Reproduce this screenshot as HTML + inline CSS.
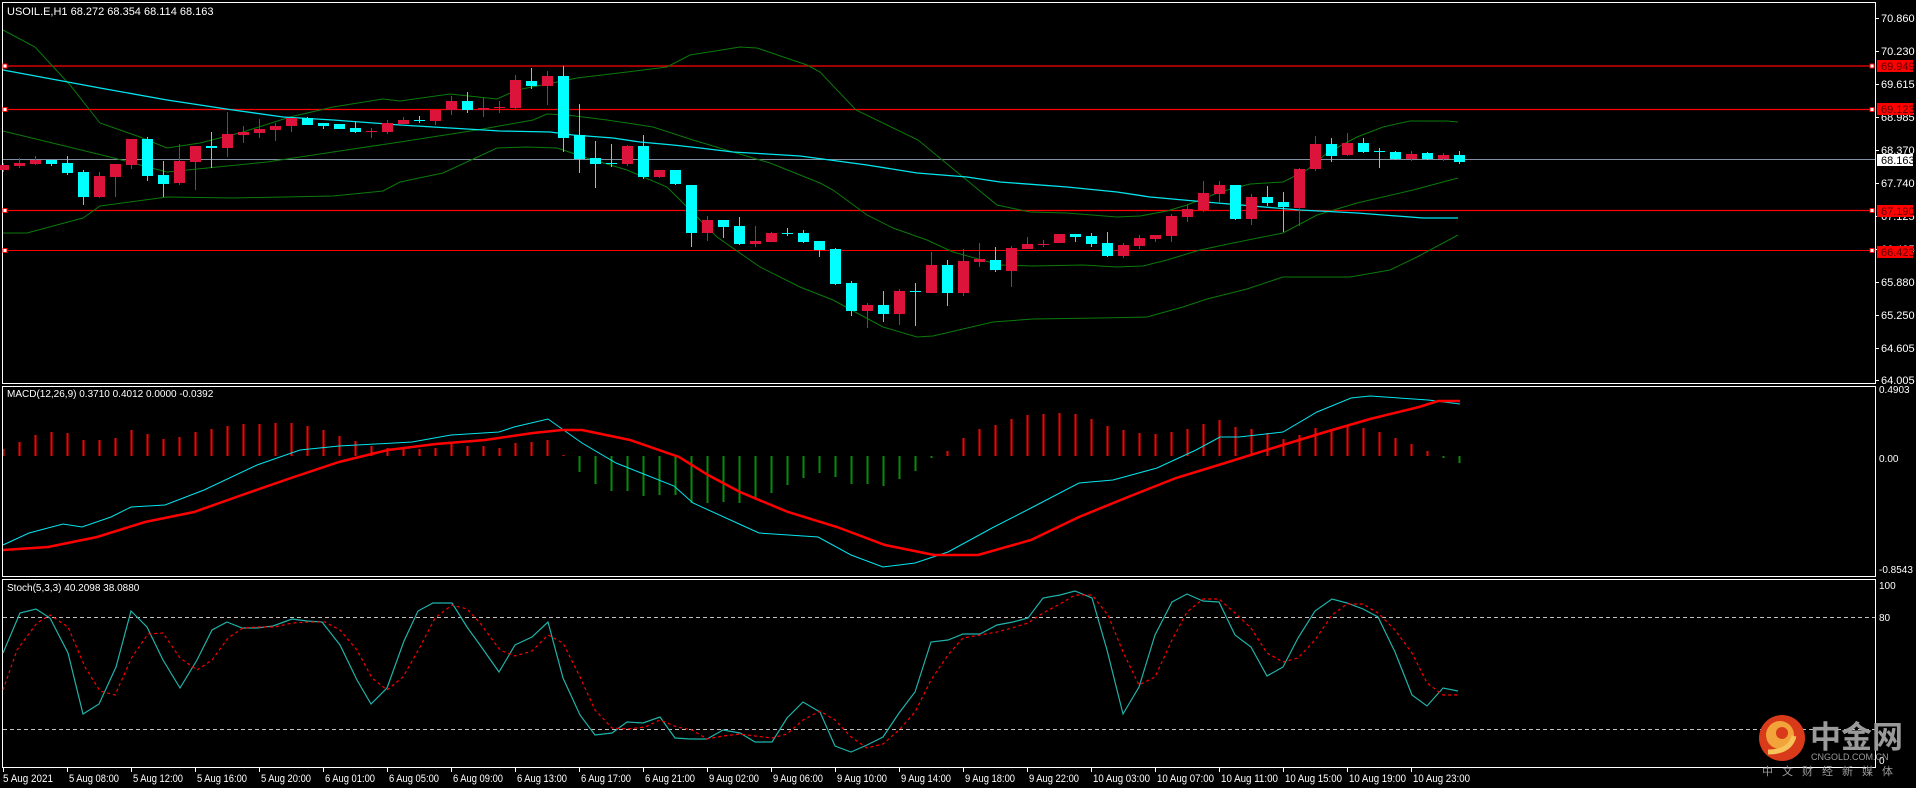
<!DOCTYPE html>
<html><head><meta charset="utf-8"><style>
html,body{margin:0;padding:0;background:#000;width:1916px;height:788px;overflow:hidden}
svg{display:block}
text{font-family:"Liberation Sans","Noto Sans CJK SC",sans-serif;font-size:11px}
</style></head><body>
<svg id="s" width="1916" height="788" xmlns="http://www.w3.org/2000/svg">
<rect width="1916" height="788" fill="#000"/>
<g id="bg"></g>
<g stroke="#fff" fill="none" stroke-width="1">
<rect x="2.5" y="2.5" width="1873" height="381"/>
<rect x="2.5" y="386.5" width="1873" height="190"/>
<rect x="2.5" y="579.5" width="1873" height="188"/>
</g>
<g id="fg"></g>
<g fill="#fff">
<text x="7" y="15">USOIL.E,H1  68.272 68.354 68.114 68.163</text>
<text x="7" y="397" style="font-size:10px">MACD(12,26,9) 0.3710 0.4012 0.0000 -0.0392</text>
<text x="7" y="591" style="font-size:10px">Stoch(5,3,3) 40.2098 38.0880</text>
<text x="1881" y="22">70.860</text>
<text x="1881" y="55">70.230</text>
<text x="1881" y="88">69.615</text>
<text x="1881" y="121">68.985</text>
<text x="1881" y="154">68.370</text>
<text x="1881" y="187">67.740</text>
<text x="1881" y="220">67.125</text>
<text x="1881" y="253">66.495</text>
<text x="1881" y="286">65.880</text>
<text x="1881" y="319">65.250</text>
<text x="1881" y="352">64.605</text>
<text x="1881" y="384">64.005</text>
</g>
<g>
<rect x="1877" y="60" width="36" height="12" fill="#f00"/><text x="1881" y="70" fill="#5a0000">69.949</text>
<rect x="1877" y="103" width="36" height="12" fill="#f00"/><text x="1881" y="113" fill="#5a0000">69.123</text>
<rect x="1877" y="154" width="36" height="12" fill="#fff"/><text x="1881" y="164" fill="#000">68.163</text>
<rect x="1877" y="205" width="36" height="12" fill="#f00"/><text x="1881" y="215" fill="#5a0000">67.190</text>
<rect x="1877" y="246" width="36" height="12" fill="#f00"/><text x="1881" y="256" fill="#5a0000">66.423</text>
</g>
<g fill="#fff">
<text x="1879" y="393" style="font-size:10px">0.4903</text>
<text x="1879" y="462" style="font-size:10px">0.00</text>
<text x="1879" y="573" style="font-size:10px">-0.8543</text>
<text x="1879" y="589" style="font-size:10px">100</text>
<text x="1879" y="621" style="font-size:10px">80</text>
<text x="1879" y="764" style="font-size:10px">0</text>
</g>
<g id="time"></g>
<g>
<circle cx="1782" cy="738" r="23" fill="#d83a1a"/>
<circle cx="1780" cy="735" r="14" fill="#f2a33a"/>
<circle cx="1782" cy="733" r="6" fill="#d83a1a"/>
<path d="M1768 752 Q1790 752 1794 736" stroke="#f6c25a" stroke-width="5" fill="none"/>
<text x="1810" y="748" fill="#9a9a9a" style="font-size:31px;font-weight:bold">中金网</text>
<text x="1811" y="760" fill="#9a9a9a" style="font-size:9px">CNGOLD.COM.CN</text>
<text x="1762" y="775" fill="#9a9a9a" style="font-size:11px;letter-spacing:9px">中文财经新媒体</text>
</g>
</svg>
<script>
var NS="http://www.w3.org/2000/svg";
function el(par,tag,at){var e=document.createElementNS(NS,tag);for(var k in at)e.setAttribute(k,at[k]);document.getElementById(par).appendChild(e);return e;}
function pl(par,pts,st,w,extra){var a={points:pts.map(function(p){return p[0]+","+p[1]}).join(" "),fill:"none",stroke:st,"stroke-width":w};if(extra)for(var k in extra)a[k]=extra[k];return el(par,"polyline",a);}
[[66,"#f00",1.2],[109.5,"#f00",1.2],[210.5,"#f00",1.2],[250.5,"#f00",1]].forEach(function(h){
 el("bg","line",{x1:3,x2:1875,y1:h[0],y2:h[0],stroke:h[1],"stroke-width":h[2]});
 el("fg","rect",{x:3,y:h[0]-2,width:4,height:4,fill:"#fff",stroke:"#f00","stroke-width":1});
 el("fg","rect",{x:1870,y:h[0]-2,width:4,height:4,fill:"#fff",stroke:"#f00","stroke-width":1});
});
el("bg","line",{x1:3,x2:1875,y1:159.5,y2:159.5,stroke:"#8090a0","stroke-width":1});
pl("bg",[[3,30],[35,47],[70,85],[100,123],[140,137],[167,148],[200,143],[243,132],[290,117],[333,107],[383,99],[400,101],[450,94],[497,99],[517,90],[577,78],[627,72],[667,67],[690,55],[740,47],[757,48],[807,65],[820,72],[856,110],[918,140],[997,205],[1030,212],[1067,213],[1117,217],[1140,216],[1167,211],[1187,205],[1220,192],[1250,184],[1283,182],[1307,170],[1327,153],[1357,137],[1383,127],[1410,121],[1447,121],[1458,122]],"#0a7a0a",1);
pl("bg",[[3,131],[110,157],[167,172],[267,162],[333,152],[400,142],[477,130],[533,120],[547,114],[567,115],[607,120],[653,127],[693,140],[733,152],[770,163],[820,183],[833,190],[867,215],[893,228],[927,240],[953,252],[1000,265],[1033,266],[1083,265],[1117,267],[1143,266],[1167,260],[1200,250],[1233,243],[1283,233],[1317,215],[1357,203],[1413,190],[1458,178]],"#0a7a0a",1);
pl("bg",[[3,233],[27,233],[83,218],[100,206],[167,197],[233,198],[333,196],[383,191],[400,182],[443,173],[497,148],[527,147],[557,148],[587,158],[627,170],[667,187],[687,207],[717,237],[760,267],[800,287],[833,300],[857,313],[883,327],[917,337],[933,336],[993,322],[1033,319],[1100,318],[1147,317],[1183,307],[1207,299],[1247,289],[1283,277],[1350,277],[1390,270],[1417,257],[1458,235]],"#0a7a0a",1);
pl("bg",[[3,70],[100,88],[167,100],[233,110],[283,117],[333,120],[400,125],[450,128],[500,131],[550,132],[573,135],[613,138],[640,142],[673,145],[700,148],[733,152],[767,154],[800,156],[867,165],[917,173],[967,177],[1000,182],[1067,187],[1117,192],[1150,197],[1217,203],[1300,210],[1357,213],[1423,218],[1458,218]],"#00e5ee",1.3);
var C="r 165 170 163 172|r 163 166 158 168|r 160 164 156 165|c 160 164 160 166|c 163 173 156 175|c 172 197 170 205|r 176 197 172 198|r 164 177 164 197|r 139 165 139 169|c 139 176 137 181|c 175 184 161 197|r 161 183 144 185|r 146 162 146 190|c 146 148 132 168|r 134 148 112 157|r 132 135 126 143|r 129 133 119 138|r 126 130 123 141|r 118 126 118 132|c 118 125 117 125|c 123 126 123 129|c 124 129 124 129|c 128 132 122 133|r 131 132 128 138|r 123 132 120 134|r 120 124 117 126|c 120 121 116 123|r 110 121 110 125|r 101 110 96 115|c 101 110 92 113|r 108 110 97 117|r 107 108 101 113|r 80 108 75 109|c 81 86 68 89|r 76 86 71 105|c 76 138 66 152|c 135 159 104 173|c 158 164 141 188|c 163 164 144 167|r 146 164 145 166|c 146 177 135 179|r 170 177 170 178|c 170 184 170 185|c 185 233 185 247|r 220 233 216 241|c 220 227 220 238|c 226 244 217 245|r 241 244 226 247|r 233 242 232 242|c 233 234 228 236|c 233 242 230 243|c 241 250 241 257|c 249 284 248 285|c 283 311 281 316|r 305 311 303 328|c 305 314 291 322|r 291 314 289 325|c 291 292 283 326|r 265 293 252 293|c 265 293 260 306|r 261 293 249 296|r 259 262 243 267|c 260 270 247 272|r 248 271 246 287|r 244 249 237 249|r 244 245 240 247|r 234 243 234 243|c 234 237 234 242|c 236 244 233 247|c 243 256 232 257|r 245 256 243 258|r 238 246 235 249|r 235 239 235 242|r 216 236 214 242|r 209 217 205 222|r 193 210 181 212|r 185 194 181 203|c 185 219 185 220|r 197 219 194 225|c 197 203 186 206|c 202 207 192 232|r 169 208 168 226|r 144 169 136 171|c 144 156 138 162|r 143 155 133 156|c 143 152 138 153|c 151 152 148 168|c 152 159 151 160|r 154 159 151 161|c 153 159 152 160|r 155 159 153 161|c 155 162 151 164".split("|");
C.forEach(function(s,k){var a=s.split(" ");var col=a[0]=="r"?"#dc143c":"#00ffff";var t=+a[1],b=+a[2],wt=+a[3],wb=+a[4];var cx=3+16*k;
 el("fg","rect",{x:cx,y:wt,width:1,height:Math.max(1,wb-wt),fill:col});
 el("fg","rect",{x:cx-5,y:t,width:11,height:Math.max(1,b-t),fill:col});});
var M=[449,442,435,432,433,440,440,438,430,434,439,437,432,429,426,424,424,423,423,426,430,436,441,446,448,449,449,448,443,446,446,448,443,442,440,455,472,484,491,491,496,495,495,503,503,502,503,499,493,485,478,473,477,484,484,486,479,471,458,451,438,429,425,419,415,414,413,414,419,426,430,433,434,432,429,424,420,427,429,433,439,435,428,429,426,428,432,438,444,451,458,463];
var greenIdx={};for(var i=36;i<=58;i++)greenIdx[i]=1;greenIdx[90]=1;greenIdx[91]=1;
M.forEach(function(v,k){var cx=3+16*k;var z=456;var g=greenIdx[k];var y1=Math.min(v,z),h=Math.max(1,Math.abs(v-z));
 el("bg","rect",{x:cx-0.5,y:y1,width:2,height:h,fill:g?"#0a8a0a":"#f00"});});
pl("fg",[[3,545],[29,533],[63,524],[82,527],[111,517],[131,507],[165,505],[204,490],[257,465],[300,450],[339,446],[412,442],[451,435],[499,432],[514,427],[548,419],[582,443],[616,463],[674,486],[693,503],[737,523],[759,533],[818,537],[851,555],[883,567],[915,563],[948,552],[992,528],[1031,508],[1079,483],[1113,480],[1157,468],[1196,450],[1220,437],[1239,437],[1283,432],[1317,412],[1351,398],[1370,396],[1428,400],[1460,404]],"#00e5ee",1);
pl("fg",[[3,550],[48,547],[97,537],[145,522],[194,512],[242,495],[291,478],[339,462],[388,450],[436,444],[485,440],[533,433],[562,430],[582,430],[630,440],[679,457],[708,475],[740,492],[788,512],[837,527],[885,545],[934,555],[978,555],[1031,540],[1079,517],[1128,497],[1176,478],[1225,463],[1273,448],[1322,433],[1370,419],[1419,407],[1438,401],[1460,401]],"#f00",2.5);
el("bg","line",{x1:3,x2:1875,y1:617.5,y2:617.5,stroke:"#c0c0c0","stroke-dasharray":"4,3"});
el("bg","line",{x1:3,x2:1875,y1:729.5,y2:729.5,stroke:"#c0c0c0","stroke-dasharray":"4,3"});
pl("fg",[[3,653],[20,613],[36,609],[50,618],[68,653],[83,714],[99,704],[116,667],[131,611],[147,627],[163,660],[180,688],[197,660],[212,630],[227,622],[242,628],[257,628],[273,626],[292,619],[307,621],[322,622],[340,645],[357,680],[371,704],[387,688],[404,641],[418,611],[433,603],[452,603],[467,627],[480,645],[499,672],[515,645],[532,637],[548,622],[563,678],[580,715],[595,735],[612,733],[627,722],[643,723],[660,717],[675,738],[690,739],[707,739],[723,730],[740,733],[755,742],[772,742],[787,718],[803,702],[820,712],[835,746],[851,752],[867,745],[883,737],[899,713],[915,692],[931,642],[948,640],[963,634],[980,634],[997,625],[1013,622],[1028,618],[1043,598],[1060,595],[1075,591],[1092,598],[1107,650],[1123,714],[1139,687],[1155,635],[1172,602],[1187,594],[1203,601],[1219,602],[1235,635],[1251,647],[1267,676],[1283,667],[1298,638],[1315,611],[1332,599],[1347,603],[1363,609],[1378,617],[1395,652],[1412,695],[1427,706],[1443,688],[1458,691]],"#20b2aa",1.2);
pl("fg",[[3,690],[17,650],[37,623],[50,615],[68,627],[85,667],[100,691],[115,695],[132,657],[148,634],[163,633],[180,658],[197,670],[212,660],[228,638],[243,628],[258,627],[275,627],[292,623],[308,622],[325,622],[340,630],[357,650],[372,678],[387,690],[403,677],[420,647],[435,618],[452,605],[467,609],[480,623],[500,650],[515,656],[532,651],[548,635],[563,643],[580,677],[595,710],[612,728],[628,729],[645,727],[660,720],[677,727],[692,730],[707,739],[723,736],[740,734],[755,736],[772,738],[787,734],[803,720],[820,711],[835,720],[851,737],[867,748],[883,744],[899,730],[915,712],[931,680],[948,655],[963,638],[980,635],[997,632],[1012,628],[1028,623],[1043,613],[1060,604],[1075,595],[1092,595],[1108,615],[1123,652],[1139,685],[1155,677],[1172,640],[1187,612],[1203,599],[1219,599],[1235,613],[1251,628],[1267,653],[1283,662],[1298,658],[1315,640],[1332,615],[1347,604],[1363,604],[1378,613],[1395,630],[1412,653],[1427,683],[1443,695],[1457,695]],"#f00",1.2,{"stroke-dasharray":"3,3"});
[18,51,84,117,150,183,216,249,282,315,348,380].forEach(function(y){el("bg","line",{x1:1875,x2:1879,y1:y+0.5,y2:y+0.5,stroke:"#fff"});});
var L=["5 Aug 2021","5 Aug 08:00","5 Aug 12:00","5 Aug 16:00","5 Aug 20:00","6 Aug 01:00","6 Aug 05:00","6 Aug 09:00","6 Aug 13:00","6 Aug 17:00","6 Aug 21:00","9 Aug 02:00","9 Aug 06:00","9 Aug 10:00","9 Aug 14:00","9 Aug 18:00","9 Aug 22:00","10 Aug 03:00","10 Aug 07:00","10 Aug 11:00","10 Aug 15:00","10 Aug 19:00","10 Aug 23:00"];
L.forEach(function(s,i){var x=3+64*i;el("time","line",{x1:x+0.5,x2:x+0.5,y1:767,y2:772,stroke:"#fff"});var t=el("time","text",{x:x+(i==0?0:2),y:782,fill:"#fff",style:"font-size:11px",textLength:(s.length>11?"57":"50"),lengthAdjust:"spacingAndGlyphs"});t.textContent=s;});
</script>
</body></html>
